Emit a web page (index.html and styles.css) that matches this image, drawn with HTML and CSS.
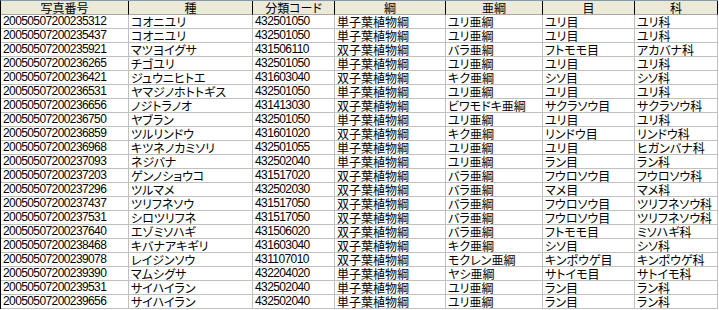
FILE: index.html
```html
<!DOCTYPE html>
<html lang="ja">
<head>
<meta charset="utf-8">
<link rel="stylesheet" href="styles.css">
</head>
<body>
<div class="grid">
  <div class="row head">
    <div class="c">写真番号</div><div class="c">種</div><div class="c">分類コード</div><div class="c">綱</div><div class="c">亜綱</div><div class="c">目</div><div class="c">科</div>
  </div>
  <div class="row"><div class="c n">20050507200235312</div><div class="c">コオニユリ</div><div class="c n">432501050</div><div class="c">単子葉植物綱</div><div class="c">ユリ亜綱</div><div class="c">ユリ目</div><div class="c">ユリ科</div></div>
  <div class="row"><div class="c n">20050507200235437</div><div class="c">コオニユリ</div><div class="c n">432501050</div><div class="c">単子葉植物綱</div><div class="c">ユリ亜綱</div><div class="c">ユリ目</div><div class="c">ユリ科</div></div>
  <div class="row"><div class="c n">20050507200235921</div><div class="c">マツヨイグサ</div><div class="c n">431506110</div><div class="c">双子葉植物綱</div><div class="c">バラ亜綱</div><div class="c">フトモモ目</div><div class="c">アカバナ科</div></div>
  <div class="row"><div class="c n">20050507200236265</div><div class="c">チゴユリ</div><div class="c n">432501050</div><div class="c">単子葉植物綱</div><div class="c">ユリ亜綱</div><div class="c">ユリ目</div><div class="c">ユリ科</div></div>
  <div class="row"><div class="c n">20050507200236421</div><div class="c">ジュウニヒトエ</div><div class="c n">431603040</div><div class="c">双子葉植物綱</div><div class="c">キク亜綱</div><div class="c">シソ目</div><div class="c">シソ科</div></div>
  <div class="row"><div class="c n">20050507200236531</div><div class="c">ヤマジノホトトギス</div><div class="c n">432501050</div><div class="c">単子葉植物綱</div><div class="c">ユリ亜綱</div><div class="c">ユリ目</div><div class="c">ユリ科</div></div>
  <div class="row"><div class="c n">20050507200236656</div><div class="c">ノジトラノオ</div><div class="c n">431413030</div><div class="c">双子葉植物綱</div><div class="c">ビワモドキ亜綱</div><div class="c">サクラソウ目</div><div class="c">サクラソウ科</div></div>
  <div class="row"><div class="c n">20050507200236750</div><div class="c">ヤブラン</div><div class="c n">432501050</div><div class="c">単子葉植物綱</div><div class="c">ユリ亜綱</div><div class="c">ユリ目</div><div class="c">ユリ科</div></div>
  <div class="row"><div class="c n">20050507200236859</div><div class="c">ツルリンドウ</div><div class="c n">431601020</div><div class="c">双子葉植物綱</div><div class="c">キク亜綱</div><div class="c">リンドウ目</div><div class="c">リンドウ科</div></div>
  <div class="row"><div class="c n">20050507200236968</div><div class="c">キツネノカミソリ</div><div class="c n">432501055</div><div class="c">単子葉植物綱</div><div class="c">ユリ亜綱</div><div class="c">ユリ目</div><div class="c">ヒガンバナ科</div></div>
  <div class="row"><div class="c n">20050507200237093</div><div class="c">ネジバナ</div><div class="c n">432502040</div><div class="c">単子葉植物綱</div><div class="c">ユリ亜綱</div><div class="c">ラン目</div><div class="c">ラン科</div></div>
  <div class="row"><div class="c n">20050507200237203</div><div class="c">ゲンノショウコ</div><div class="c n">431517020</div><div class="c">双子葉植物綱</div><div class="c">バラ亜綱</div><div class="c">フウロソウ目</div><div class="c">フウロソウ科</div></div>
  <div class="row"><div class="c n">20050507200237296</div><div class="c">ツルマメ</div><div class="c n">432502030</div><div class="c">双子葉植物綱</div><div class="c">バラ亜綱</div><div class="c">マメ目</div><div class="c">マメ科</div></div>
  <div class="row"><div class="c n">20050507200237437</div><div class="c">ツリフネソウ</div><div class="c n">431517050</div><div class="c">双子葉植物綱</div><div class="c">バラ亜綱</div><div class="c">フウロソウ目</div><div class="c">ツリフネソウ科</div></div>
  <div class="row"><div class="c n">20050507200237531</div><div class="c">シロツリフネ</div><div class="c n">431517050</div><div class="c">双子葉植物綱</div><div class="c">バラ亜綱</div><div class="c">フウロソウ目</div><div class="c">ツリフネソウ科</div></div>
  <div class="row"><div class="c n">20050507200237640</div><div class="c">エゾミソハギ</div><div class="c n">431506020</div><div class="c">双子葉植物綱</div><div class="c">バラ亜綱</div><div class="c">フトモモ目</div><div class="c">ミソハギ科</div></div>
  <div class="row"><div class="c n">20050507200238468</div><div class="c">キバナアキギリ</div><div class="c n">431603040</div><div class="c">双子葉植物綱</div><div class="c">キク亜綱</div><div class="c">シソ目</div><div class="c">シソ科</div></div>
  <div class="row"><div class="c n">20050507200239078</div><div class="c">レイジンソウ</div><div class="c n">431107010</div><div class="c">双子葉植物綱</div><div class="c">モクレン亜綱</div><div class="c">キンポウゲ目</div><div class="c">キンポウゲ科</div></div>
  <div class="row"><div class="c n">20050507200239390</div><div class="c">マムシグサ</div><div class="c n">432204020</div><div class="c">単子葉植物綱</div><div class="c">ヤシ亜綱</div><div class="c">サトイモ目</div><div class="c">サトイモ科</div></div>
  <div class="row"><div class="c n">20050507200239531</div><div class="c">サイハイラン</div><div class="c n">432502040</div><div class="c">単子葉植物綱</div><div class="c">ユリ亜綱</div><div class="c">ラン目</div><div class="c">ラン科</div></div>
  <div class="row"><div class="c n">20050507200239656</div><div class="c">サイハイラン</div><div class="c n">432502040</div><div class="c">単子葉植物綱</div><div class="c">ユリ亜綱</div><div class="c">ラン目</div><div class="c">ラン科</div></div>
</div>
</body>
</html>
```
FILE: styles.css
```css
html, body {
  margin: 0;
  padding: 0;
  background: #ffffff;
}
.grid {
  width: 718px;
  box-sizing: border-box;
  border-top: 1px solid #7f9db9;
  border-left: 1px solid #000000;
  font-family: "Noto Sans CJK JP", sans-serif;
  font-size: 12px;
  font-feature-settings: "palt";
  color: #000000;
}
.row {
  display: grid;
  grid-template-columns: 128px 124px 82px 111px 97px 92px 83px;
  height: 14px;
}
.c {
  box-sizing: border-box;
  border-right: 1px solid #c0c0c0;
  border-bottom: 1px solid #c0c0c0;
  height: 14px;
  line-height: 13px;
  padding-left: 2px;
  white-space: nowrap;
  overflow: hidden;
}
.n {
  font-family: "Liberation Sans", sans-serif;
  letter-spacing: -0.6px;
}
.head .c {
  background: #ece9d8;
  border-right-color: #000000;
  border-bottom-color: #aca899;
  text-align: center;
  padding-left: 0;
}
```
